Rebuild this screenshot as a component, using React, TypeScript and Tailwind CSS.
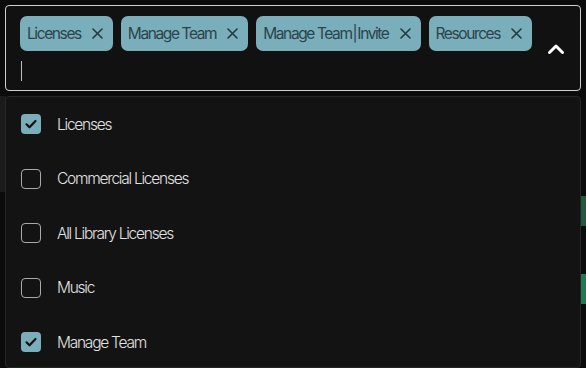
import * as React from "react";

const chips = ["Licenses", "Manage Team", "Manage Team|Invite", "Resources"];

const options = [
  { label: "Licenses", checked: true },
  { label: "Commercial Licenses", checked: false },
  { label: "All Library Licenses", checked: false },
  { label: "Music", checked: false },
  { label: "Manage Team", checked: true },
];

function XIcon() {
  return (
    <svg width="11" height="11" viewBox="0 0 11 11" fill="none" stroke="#223a42" strokeWidth="1.6" strokeLinecap="round">
      <path d="M1 1l9 9M10 1l-9 9" />
    </svg>
  );
}

function Check() {
  return (
    <svg width="14" height="14" viewBox="0 0 14 14" fill="none" stroke="#111" strokeWidth="2.2" strokeLinecap="round" strokeLinejoin="round">
      <path d="M2.5 7.3l3 3 6-6.3" />
    </svg>
  );
}

function ChipLabel({ text }: { text: string }) {
  const parts = text.split("|");
  if (parts.length === 1) return <span>{text}</span>;
  return (
    <span>
      {parts[0]}
      <span className="mx-[1px]">|</span>
      {parts[1]}
    </span>
  );
}

export default function App() {
  return (
    <div
      className="relative h-[368px] w-[586px] overflow-hidden bg-[#0b0b0b] pt-[5px]"
      style={{ fontFamily: "Inter, 'Noto Sans', sans-serif" }}
    >
      {/* bits of the page behind the dropdown */}
      <div className="absolute left-0 top-[96px] h-[96px] w-[6px] bg-[#1b1b1b]" />
      <div className="absolute right-0 top-[196px] h-[30px] w-[6px] bg-[#1d5a40]" />
      <div className="absolute right-0 top-[274px] h-[30px] w-[6px] bg-[#1f7a52]" />

      <div className="relative mx-[5px] h-[86px] rounded-[4px] border-[1.5px] border-[#cfcfcf] bg-[#111111] pl-[14px] pt-[10px]">
        <div className="flex gap-2">
          {chips.map((c) => (
            <div
              key={c}
              className="flex h-[35px] shrink-0 items-center gap-[11px] whitespace-nowrap rounded-[7px] bg-[#7aaebb] pl-[7px] pr-[10px] text-[15.5px] tracking-[-0.09em] text-[#2b444c]"
            >
              <ChipLabel text={c} />
              <XIcon />
            </div>
          ))}
        </div>
        <div className="ml-[0.5px] mt-[10px] h-[20px] w-[1.5px] bg-[#bdbdbd]" />
        <svg
          className="absolute right-[15px] top-[37px]"
          width="18"
          height="12"
          viewBox="0 0 18 12"
          fill="none"
          stroke="#ffffff"
          strokeWidth="3"
          strokeLinecap="round"
          strokeLinejoin="round"
        >
          <path d="M2.5 9.5L9 3l6.5 6.5" />
        </svg>
      </div>

      <div className="relative mx-[5px] mt-[5px] h-[272px] rounded-[4px] border border-[#262626] bg-[#131313]">
        {options.map((o) => (
          <div key={o.label} className="flex h-[54.5px] items-center pl-[15px]">
            {o.checked ? (
              <div className="flex h-[20px] w-[20px] items-center justify-center rounded-[4px] bg-[#7aaebb]">
                <Check />
              </div>
            ) : (
              <div className="h-[20px] w-[20px] rounded-[4px] border-[1.5px] border-[#a9a9a9]" />
            )}
            <span className="ml-[16px] whitespace-nowrap text-[15.5px] font-light tracking-[-0.08em] text-[#e2e2e2]">
              {o.label}
            </span>
          </div>
        ))}
      </div>
    </div>
  );
}
